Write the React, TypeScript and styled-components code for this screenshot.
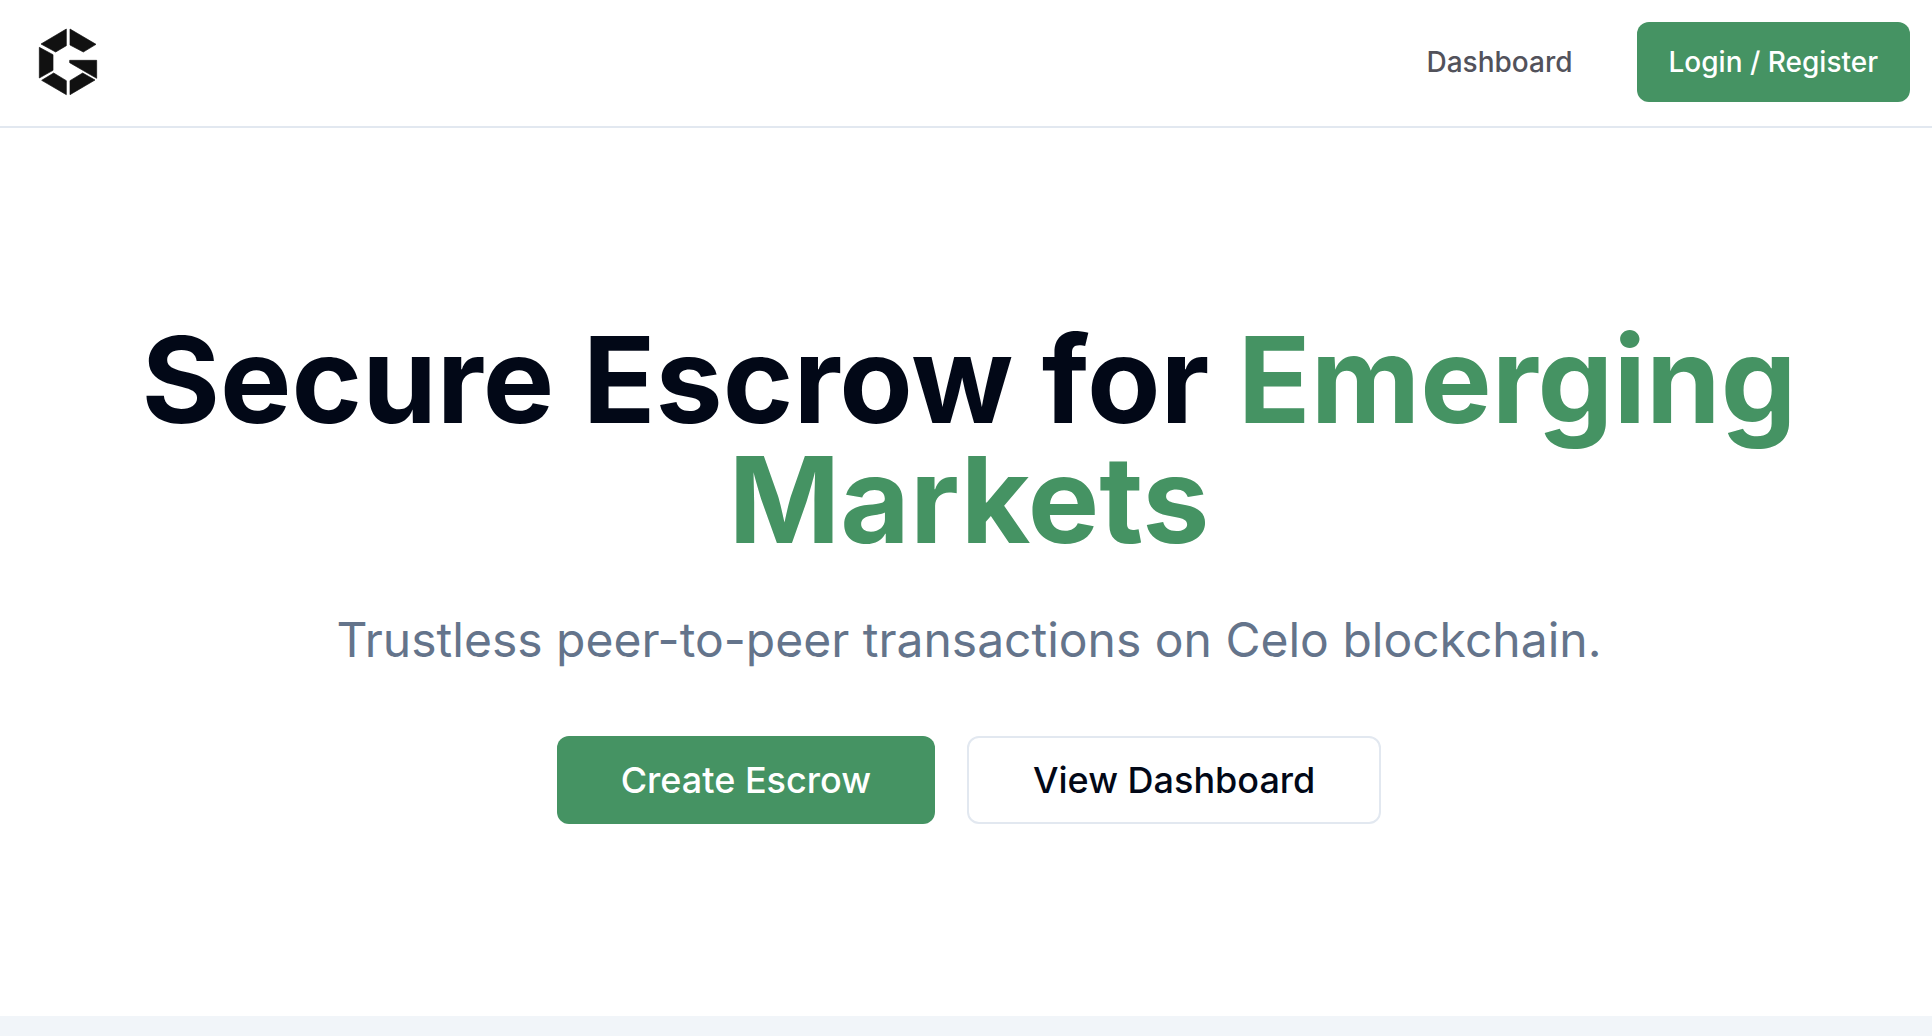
import React from "react";
import styled, { createGlobalStyle, css } from "styled-components";

const GlobalStyle = createGlobalStyle`
  *, *::before, *::after { box-sizing: border-box; }
  body {
    margin: 0;
    background: #ffffff;
    color: #020817;
    font-family: Inter, "Liberation Sans", sans-serif;
    -webkit-font-smoothing: antialiased;
  }
`;

const Page = styled.div`
  min-height: 100vh;
  display: flex;
  flex-direction: column;
  overflow-x: hidden;
`;

const Header = styled.header`
  display: flex;
  align-items: center;
  justify-content: space-between;
  padding: 22px 22px 24px 36px;
  border-bottom: 2px solid #e2e8f0;
`;

const HomeLink = styled.a`
  display: flex;
`;

const Nav = styled.nav`
  display: flex;
  align-items: center;
  gap: 64px;
`;

const NavLink = styled.a`
  color: #52525b;
  font-size: 28px;
  line-height: 40px;
  font-weight: 500;
  text-decoration: none;
`;

const Button = styled.button<{ $size: "md" | "lg"; $outline?: boolean }>`
  border: 0;
  border-radius: 12px;
  background: #459363;
  color: #ffffff;
  font-family: inherit;
  font-weight: 500;
  white-space: nowrap;
  cursor: pointer;
  ${({ $size }) =>
    $size === "lg"
      ? css`
          padding: 16px 64px;
          font-size: 36px;
          line-height: 56px;
        `
      : css`
          padding: 20px 32px;
          font-size: 28px;
          line-height: 40px;
        `}
  ${({ $outline }) =>
    $outline &&
    css`
      padding: 14px 64px;
      border: 2px solid #e2e8f0;
      background: #ffffff;
      color: #020817;
    `}
`;

const Hero = styled.section`
  display: flex;
  flex-direction: column;
  align-items: center;
  padding: 192px 58px 192px 64px;
  text-align: center;
`;

const Title = styled.h1`
  max-width: 1792px;
  margin: 0;
  font-size: 120px;
  line-height: 120px;
  font-weight: 700;
`;

const Accent = styled.span`
  color: #459363;
`;

const Subtitle = styled.p`
  margin: 48px 0 64px;
  color: #64748b;
  font-size: 48px;
  line-height: 64px;
`;

const Actions = styled.div`
  display: flex;
  flex-wrap: wrap;
  justify-content: center;
  gap: 32px;
`;

const NextSection = styled.section`
  flex: 1;
  background: #f1f5f9;
`;

function Logo() {
  return (
    <svg width="64" height="72" viewBox="48 48 192 216" fill="#111111" stroke="#111111" strokeWidth="2" strokeLinejoin="round" aria-hidden="true">
      <path d="M139 57V107L107 126L63 102Z" />
      <path d="M150 57L228 103L190 126L150 105Z" />
      <path d="M58 112L99 134V181L58 204Z" />
      <path d="M149 151H230V205L149 158Z" />
      <path d="M101 189L139 212V254L65 211Z" />
      <path d="M188 189L225 210L150 254V212Z" />
    </svg>
  );
}

export default function App() {
  return (
    <Page>
      <GlobalStyle />
      <Header>
        <HomeLink href="#" aria-label="Home">
          <Logo />
        </HomeLink>
        <Nav>
          <NavLink href="#dashboard">Dashboard</NavLink>
          <Button $size="md">Login / Register</Button>
        </Nav>
      </Header>
      <Hero>
        <Title>
          Secure Escrow for <Accent>Emerging Markets</Accent>
        </Title>
        <Subtitle>Trustless peer-to-peer transactions on Celo blockchain.</Subtitle>
        <Actions>
          <Button $size="lg">Create Escrow</Button>
          <Button $size="lg" $outline>
            View Dashboard
          </Button>
        </Actions>
      </Hero>
      <NextSection />
    </Page>
  );
}
